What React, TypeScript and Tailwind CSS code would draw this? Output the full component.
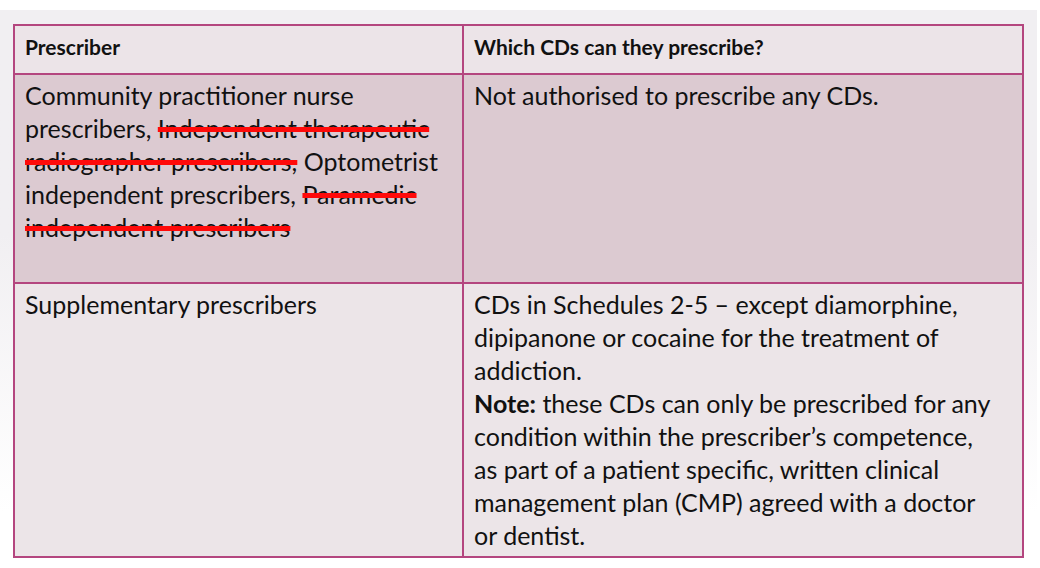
const font = { fontFamily: "Lato, 'Open Sans', sans-serif" }

function Strike({ children }: { children: React.ReactNode }) {
  return (
    <span className="line-through decoration-[#ff0a0a] decoration-5">{children}</span>
  )
}

export default function App() {
  return (
    <div className="w-[1040px] h-[568px] bg-white pt-[10px]" style={font}>
      <div className="h-[558px] w-[1037px] bg-gradient-to-b from-[#f1eff2] from-40% to-white to-90% pl-[13px] pt-[14px]">
        <div className="w-[1011px] grid grid-cols-[447px_1fr] gap-[2px] bg-[#b4467f] p-[2px] text-[#111]">
          {/* header */}
          <div className="h-[47px] bg-[#ece4e8] px-[10px] pb-[5px] flex items-center text-[21px] font-bold">
            Prescriber
          </div>
          <div className="h-[47px] bg-[#ece4e8] px-[10px] pb-[5px] flex items-center text-[21px] font-bold">
            Which CDs can they prescribe?
          </div>

          {/* row 1 */}
          <div className="h-[207px] bg-[#dccad1] px-[10px] pt-[4px] text-[25px] leading-[33px] whitespace-nowrap">
            Community practitioner nurse
            <br />
            prescribers, <Strike>Independent therapeutic</Strike>
            <br />
            <Strike>radiographer prescribers,</Strike> Optometrist
            <br />
            independent prescribers, <Strike>Paramedic</Strike>
            <br />
            <Strike>independent prescribers</Strike>
          </div>
          <div className="h-[207px] bg-[#dccad1] px-[10px] pt-[4px] text-[25px] leading-[33px]">
            Not authorised to prescribe any CDs.
          </div>

          {/* row 2 */}
          <div className="h-[272px] bg-[#ece5e8] px-[10px] pt-[4px] text-[25px] leading-[33px]">
            Supplementary prescribers
          </div>
          <div className="h-[272px] bg-[#ece5e8] px-[10px] pt-[4px] text-[25px] leading-[33px] whitespace-nowrap">
            CDs in Schedules 2-5 – except diamorphine,
            <br />
            dipipanone or cocaine for the treatment of
            <br />
            addiction.
            <br />
            <span className="font-bold">Note:</span> these CDs can only be prescribed for any
            <br />
            condition within the prescriber’s competence,
            <br />
            as part of a patient specific, written clinical
            <br />
            management plan (CMP) agreed with a doctor
            <br />
            or dentist.
          </div>
        </div>
      </div>
    </div>
  )
}
